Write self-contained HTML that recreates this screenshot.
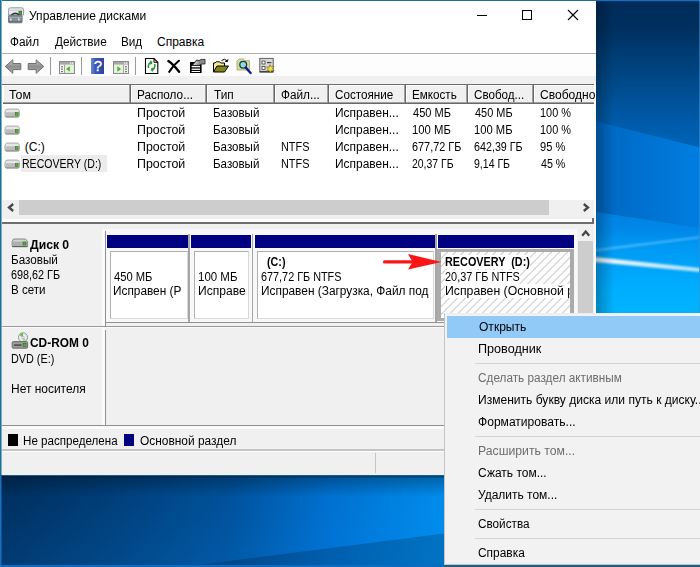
<!DOCTYPE html>
<html lang="ru">
<head>
<meta charset="utf-8">
<title>Управление дисками</title>
<style>
html,body{margin:0;padding:0;}
body{width:700px;height:567px;overflow:hidden;position:relative;background:#0b4f94;font-family:"Liberation Sans",sans-serif;font-size:12px;color:#000;}
.a{position:absolute;}
.t{position:absolute;white-space:pre;line-height:14px;font-size:12px;transform-origin:0 0;}
.b{font-weight:bold;}
#desk{position:absolute;left:0;top:0;width:700px;height:567px;}
#win{position:absolute;left:0;top:0;width:596px;height:476px;background:#fff;overflow:hidden;}
#ctx{position:absolute;left:444px;top:313px;width:260px;height:252px;background:#f2f2f2;border:1px solid #c4c4c4;border-top-color:#ececec;box-sizing:border-box;}
.hdr{position:absolute;top:85px;height:19px;background:#f0f0f0;box-sizing:border-box;border-right:1px solid #696969;border-bottom:1px solid #696969;box-shadow:inset -1px -1px 0 #a0a0a0, inset 1px 1px 0 #fff;}
.sep{position:absolute;top:57px;width:1px;height:18px;background:#9a9a9a;}
.ms{position:absolute;left:475px;width:225px;height:1px;background:#d4d4d4;}
.pb{position:absolute;top:251px;height:68px;background:#fff;box-sizing:border-box;border:1px solid #b0b0b0;border-right-color:#d8d8d8;border-bottom-color:#d8d8d8;}
</style>
</head>
<body>
<svg id="desk" width="700" height="567" viewBox="0 0 700 567">
<defs>
<linearGradient id="gA" gradientUnits="userSpaceOnUse" x1="0" y1="0" x2="0" y2="150"><stop offset="0" stop-color="#002b58"/><stop offset="0.19" stop-color="#003060"/><stop offset="0.4" stop-color="#003f78"/><stop offset="0.59" stop-color="#004c8e"/><stop offset="0.8" stop-color="#005aa8"/><stop offset="1" stop-color="#0064b8"/></linearGradient>
<linearGradient id="gB" gradientUnits="userSpaceOnUse" x1="606" y1="0" x2="700" y2="0"><stop offset="0" stop-color="#0068c4"/><stop offset="1" stop-color="#007ee2"/></linearGradient>
<linearGradient id="gC" gradientUnits="userSpaceOnUse" x1="0" y1="212" x2="0" y2="313"><stop offset="0" stop-color="#0082e2"/><stop offset="0.18" stop-color="#0088e8"/><stop offset="0.33" stop-color="#0098f4"/><stop offset="0.8" stop-color="#00b0ff"/><stop offset="1" stop-color="#00b4ff"/></linearGradient>
<linearGradient id="g2" gradientUnits="userSpaceOnUse" x1="0" y1="0" x2="444" y2="0"><stop offset="0" stop-color="#003060"/><stop offset="0.045" stop-color="#003264"/><stop offset="0.27" stop-color="#00407c"/><stop offset="0.52" stop-color="#00529c"/><stop offset="0.74" stop-color="#0070d0"/><stop offset="0.957" stop-color="#0088e8"/><stop offset="1" stop-color="#008cec"/></linearGradient>
<linearGradient id="gW" gradientUnits="userSpaceOnUse" x1="596" y1="0" x2="700" y2="0"><stop offset="0" stop-color="#fff" stop-opacity="0.95"/><stop offset="1" stop-color="#fff" stop-opacity="0.7"/></linearGradient>
<linearGradient id="sR" gradientUnits="userSpaceOnUse" x1="596" y1="0" x2="614" y2="0"><stop offset="0" stop-color="#000" stop-opacity="0.26"/><stop offset="1" stop-color="#000" stop-opacity="0"/></linearGradient>
<linearGradient id="sB" gradientUnits="userSpaceOnUse" x1="0" y1="476" x2="0" y2="497"><stop offset="0" stop-color="#000" stop-opacity="0.3"/><stop offset="1" stop-color="#000" stop-opacity="0"/></linearGradient>
<linearGradient id="lB" gradientUnits="userSpaceOnUse" x1="0" y1="500" x2="0" y2="565"><stop offset="0" stop-color="#1090ff" stop-opacity="0"/><stop offset="1" stop-color="#1090ff" stop-opacity="0.12"/></linearGradient>
<filter id="bl" x="-5%" y="-50%" width="110%" height="200%"><feGaussianBlur stdDeviation="0.8"/></filter>
</defs>
<rect x="590" y="0" width="110" height="320" fill="url(#gA)"/>
<polygon points="590,120 700,147.5 700,320 590,320" fill="url(#gB)"/>
<polygon points="590,211 700,228 700,320 590,320" fill="url(#gC)"/>
<polygon points="590,250 700,236.5 700,238 590,252" fill="#7cd0ff" opacity="0.7" filter="url(#bl)"/>
<polygon points="590,256.5 700,268 700,272 590,261.5" fill="url(#gW)" filter="url(#bl)"/>
<rect x="596" y="0" width="20" height="320" fill="url(#sR)"/>
<rect x="596" y="0" width="104" height="1.2" fill="#1a70b8"/>
<rect x="699" y="0" width="1" height="313" fill="#3a90d0" opacity="0.6"/>
<rect x="0" y="470" width="450" height="97" fill="url(#g2)"/>
<rect x="0" y="500" width="450" height="67" fill="url(#lB)"/>
<polygon points="190,567 190,566 444,533.5 444,567" fill="#000" opacity="0.18"/>
<rect x="0" y="476" width="450" height="22" fill="url(#sB)"/>
<rect x="0" y="476" width="450" height="1.5" fill="#021c3c" opacity="0.4"/>
<rect x="0" y="565" width="450" height="2" fill="#0a6cc0"/>
<rect x="0" y="476" width="1.5" height="91" fill="#1a70c0"/>
</svg>
<svg width="0" height="0" style="position:absolute"><defs>
<symbol id="drv" viewBox="0 0 18 11"><path d="M3.4 1.2 H14.6 Q16 1.2 16.6 2.6 L17.2 4.6 V8.4 Q17.2 10 15.6 10 H2.4 Q0.8 10 0.8 8.4 V4.6 L1.4 2.6 Q2 1.2 3.4 1.2 Z" fill="#e6e6e6" stroke="#8c8c8c" stroke-width="0.8"/><path d="M1.2 4.8 H16.8 V8.4 Q16.8 9.6 15.6 9.6 H2.4 Q1.2 9.6 1.2 8.4 Z" fill="#bcbcbc"/><path d="M1.6 9.7 Q2 10.2 2.8 10.2 H15.2 Q16 10.2 16.4 9.7" fill="none" stroke="#5e5e5e" stroke-width="0.9"/><rect x="12.4" y="5.2" width="3.2" height="3.2" fill="#4cb82e" stroke="#2b6e1e" stroke-width="0.6"/></symbol>
<symbol id="dsk" viewBox="0 0 18 11"><path d="M2.6 2 H14.4 L16.6 4.4 V8.6 Q16.6 9.6 15.6 9.6 H2.2 Q1.2 9.6 1.2 8.6 V4.4 Z" fill="#d4d4d4" stroke="#7a7a7a" stroke-width="0.9"/><path d="M1.6 4.6 H16.2 V8.6 Q16.2 9.2 15.6 9.2 H2.2 Q1.6 9.2 1.6 8.6 Z" fill="#aeb0b0"/><path d="M1.2 9.6 H16.6" stroke="#5c5c5c" stroke-width="1"/><rect x="12" y="5" width="3" height="3" fill="#58b030" stroke="#2c6e14" stroke-width="0.6"/></symbol>
<symbol id="cdr" viewBox="0 0 18 18"><circle cx="12" cy="6.4" r="4.6" fill="#e8ecec" stroke="#8c9494" stroke-width="0.9"/><path d="M8.4 4 A4.6 4.6 0 0 1 12 1.8 L12 6.4 Z" fill="#6cc04c"/><path d="M15.6 8.8 A4.6 4.6 0 0 1 12 11 L12 6.4 Z" fill="#a8d8a0"/><circle cx="12" cy="6.4" r="1.2" fill="#fff" stroke="#8c9494" stroke-width="0.6"/><rect x="1.2" y="10.6" width="15.4" height="6.6" rx="1" fill="#9a9c9c" stroke="#606464" stroke-width="0.9"/><rect x="3" y="13.4" width="7.6" height="1.4" fill="#404444"/><rect x="12.2" y="12.6" width="2.8" height="2.8" fill="#58b030" stroke="#2c6e14" stroke-width="0.6"/></symbol>
</defs></svg>
<div id="win">
<div class="a" style="left:0;top:0;width:596px;height:1px;background:#1b6f94;"></div>
<div class="a" style="left:0;top:0;width:2px;height:476px;background:linear-gradient(90deg,#1b6f94 0,#1b6f94 1px,#7fb0c8 1px,#7fb0c8 2px);"></div>
<div class="a" style="left:0;top:475px;width:596px;height:1px;background:#1b5f84;"></div>
<!-- toolbar -->
<div class="a" style="left:2px;top:53px;width:594px;height:1px;background:#b0b0b0;"></div>
<div class="a" style="left:2px;top:54px;width:594px;height:22px;background:#fdfdfd;"></div>
<div class="a" style="left:2px;top:76px;width:594px;height:8px;background:#f0f0f0;"></div>
<div class="sep" style="left:50px"></div>
<div class="sep" style="left:81px"></div>
<div class="sep" style="left:135px"></div>
<!-- toolbar icons -->
<svg class="a" style="left:4px;top:58px" width="18" height="17" viewBox="0 0 18 17"><defs><linearGradient id="ga" x1="0" y1="0" x2="0" y2="1"><stop offset="0" stop-color="#c4c4c4"/><stop offset="0.5" stop-color="#8e8e8e"/><stop offset="1" stop-color="#b0b0b0"/></linearGradient></defs><path d="M1.2 8.5 L8.8 1.8 V5.5 H16.8 V11.6 H8.8 V15.3 Z" fill="url(#ga)" stroke="#707070" stroke-width="1" stroke-linejoin="round"/></svg>
<svg class="a" style="left:27px;top:58px" width="18" height="17" viewBox="0 0 18 17"><path d="M16.8 8.5 L9.2 1.8 V5.5 H1.2 V11.6 H9.2 V15.3 Z" fill="url(#ga)" stroke="#707070" stroke-width="1" stroke-linejoin="round"/></svg>
<svg class="a" style="left:58px;top:60px" width="18" height="15" viewBox="0 0 18 15"><rect x="1.5" y="1.5" width="15" height="12" fill="#f4f4f4" stroke="#8a8a8a"/><rect x="2" y="2" width="14" height="2.6" fill="#a8a8a8"/><rect x="12" y="2.4" width="1.4" height="1.4" fill="#f0f0f0"/><rect x="14" y="2.4" width="1.4" height="1.4" fill="#f0f0f0"/><rect x="6.5" y="5" width="9.5" height="8" fill="#e4f2dc"/><rect x="6" y="4.6" width="0.9" height="9" fill="#9a9a9a"/><rect x="3" y="6.2" width="2" height="1.2" fill="#7a7a7a"/><rect x="3" y="8.6" width="2" height="1.2" fill="#7a7a7a"/><rect x="3" y="11" width="2" height="1.2" fill="#7a7a7a"/><path d="M8.2 9 L11.8 6.2 V11.8 Z" fill="#4cae2c"/></svg>
<svg class="a" style="left:91px;top:58px" width="14" height="16" viewBox="0 0 14 16"><defs><linearGradient id="gh" x1="0" y1="0" x2="1" y2="0"><stop offset="0" stop-color="#6f86d6"/><stop offset="0.35" stop-color="#3c56b4"/><stop offset="1" stop-color="#2f459c"/></linearGradient></defs><rect x="0" y="0" width="13" height="16" fill="url(#gh)"/><text x="6.8" y="13.2" font-family="Liberation Sans, sans-serif" font-size="15" fill="#fff" stroke="#fff" stroke-width="0.3" text-anchor="middle">?</text></svg>
<svg class="a" style="left:112px;top:60px" width="18" height="15" viewBox="0 0 18 15"><rect x="1.5" y="1.5" width="15" height="12" fill="#f4f4f4" stroke="#8a8a8a"/><rect x="2" y="2" width="14" height="2.6" fill="#a8a8a8"/><rect x="12" y="2.4" width="1.4" height="1.4" fill="#f0f0f0"/><rect x="14" y="2.4" width="1.4" height="1.4" fill="#f0f0f0"/><rect x="2" y="5" width="9.5" height="8" fill="#e4f2dc"/><rect x="11.2" y="4.6" width="0.9" height="9" fill="#9a9a9a"/><rect x="13" y="6.2" width="2" height="1.2" fill="#7a7a7a"/><rect x="13" y="8.6" width="2" height="1.2" fill="#7a7a7a"/><rect x="13" y="11" width="2" height="1.2" fill="#7a7a7a"/><path d="M9 9 L5.4 6.2 V11.8 Z" fill="#4cae2c"/></svg>
<svg class="a" style="left:144px;top:57px" width="16" height="18" viewBox="0 0 16 18"><path d="M1.5 1.5 H10 L13.8 5.3 V16.5 H1.5 Z" fill="#fff" stroke="#000" stroke-width="1.1"/><path d="M10 1.5 V5.3 H13.8" fill="none" stroke="#000" stroke-width="1"/><path d="M4.6 8.6 Q4.6 5.6 8 5.6 M8 5.6 l-1.8 -1.5 M8 5.6 l-1.8 1.6" fill="none" stroke="#2c9a2c" stroke-width="1.5"/><path d="M10.6 9.4 Q10.6 12.6 7.2 12.6 M7.2 12.6 l1.8 -1.6 M7.2 12.6 l1.8 1.6" fill="none" stroke="#2c9a2c" stroke-width="1.5"/><path d="M4.4 8 V11 M10.8 10 V7" stroke="#2c9a2c" stroke-width="1.5"/></svg>
<svg class="a" style="left:167px;top:59px" width="14" height="14" viewBox="0 0 16 16"><path d="M1.6 2.4 Q7 6 13.8 14.6" fill="none" stroke="#000" stroke-width="2.7" stroke-linecap="round"/><path d="M13.6 2 Q7 7 2.6 14.6" fill="none" stroke="#000" stroke-width="2.4" stroke-linecap="round"/></svg>
<svg class="a" style="left:189px;top:58px" width="17" height="16" viewBox="0 0 17 16"><rect x="1" y="4" width="11.6" height="11" fill="#000"/><rect x="2.6" y="8" width="8.4" height="1.3" fill="#fff"/><rect x="2.6" y="10.6" width="8.4" height="1.3" fill="#fff"/><rect x="2.6" y="13" width="8.4" height="1" fill="#fff"/><path d="M3 7.5 L7.5 2 L10 2.6 L12 1.4 L16 1.4 V6 L12.6 6 L10 7.6 L6 7.5 Z" fill="#8a8a8a" stroke="#202020" stroke-width="0.8"/><path d="M5 7 L8 3.6 M6.6 7 L9.4 4" stroke="#fff" stroke-width="0.7"/></svg>
<svg class="a" style="left:212px;top:57px" width="18" height="17" viewBox="0 0 18 17"><path d="M1.5 15 V6 H3 L4.2 4.8 H7.6 L8.8 6 H12.5 V9" fill="#f4ea90" stroke="#000" stroke-width="1"/><path d="M1.5 15 L5 9 H16.5 L12.5 15 Z" fill="#84841c" stroke="#000" stroke-width="1"/><path d="M9.5 3.6 Q12.5 0.8 15.2 3.8 M15.4 4.6 l-2.4 -0.4 M15.4 4.6 l0.6 -2.4" fill="none" stroke="#000" stroke-width="1"/></svg>
<svg class="a" style="left:236px;top:58px" width="17" height="17" viewBox="0 0 17 17"><path d="M1 12 V3 L3 1 H7.4 L9 2.6 H13.4 V12 Z" fill="#dadc9c" stroke="#a0a070" stroke-width="0.8"/><circle cx="7.2" cy="6.8" r="3.4" fill="#8cdce0" stroke="#1c3c3c" stroke-width="1.3"/><path d="M9.8 9.6 L14.6 15" stroke="#10208c" stroke-width="2.4" stroke-linecap="round"/></svg>
<svg class="a" style="left:259px;top:57px" width="17" height="18" viewBox="0 0 17 18"><rect x="0.8" y="1.4" width="13.4" height="13.6" fill="#d8d8d8" stroke="#606060" stroke-width="1"/><rect x="0.8" y="14" width="13.4" height="1.4" fill="#404040"/><rect x="3" y="4" width="3" height="3" fill="#fff" stroke="#404040" stroke-width="0.8"/><rect x="3" y="9.4" width="3" height="3" fill="#fff" stroke="#404040" stroke-width="0.8"/><rect x="8" y="5" width="4.4" height="1.2" fill="#404040"/><path d="M11 7.6 l1.3 2.2 l2.6 -0.5 l-1.4 2.2 l1.6 2 l-2.6 -0.2 l-1 2.6 l-1.2 -2.4 l-2.6 0.6 l1.6 -2.2 l-1.6 -2 l2.5 0.3 Z" fill="#f2e24a" stroke="#7a6a10" stroke-width="0.7"/></svg>
<!-- title icon -->
<svg class="a" style="left:8px;top:7px" width="18" height="18" viewBox="0 0 18 18"><path d="M2.4 0.8 H13.6 Q15.6 0.8 15.6 2.8 V8 H0.4 V2.8 Q0.4 0.8 2.4 0.8 Z" fill="#e6e9eb" stroke="#8a9298" stroke-width="0.9"/><path d="M1.4 3.2 H14.6" stroke="#c4c9cc" stroke-width="1"/><path d="M3.4 8 Q7.4 4.4 11.2 8" fill="none" stroke="#2e3338" stroke-width="1.5"/><rect x="10.9" y="4.2" width="2.8" height="3.2" fill="#4f9a2c" stroke="#2c5e14" stroke-width="0.6"/><rect x="0.5" y="8.4" width="13.6" height="7.4" rx="0.8" fill="#858d93" stroke="#6c747a" stroke-width="0.9"/><rect x="1" y="10" width="12.6" height="1" fill="#a4acb2"/><rect x="2" y="11.6" width="1.6" height="1.8" fill="#e8ecee"/><rect x="10" y="11.6" width="1.6" height="1.8" fill="#e8ecee"/><rect x="1" y="14" width="12.6" height="1.4" fill="#6a7278"/></svg>
<!-- window buttons -->
<div class="a" style="left:477px;top:15px;width:10px;height:1px;background:#000;"></div>
<div class="a" style="left:522px;top:10px;width:10px;height:10px;border:1px solid #000;box-sizing:border-box;"></div>
<svg class="a" style="left:567px;top:9px" width="12" height="12" viewBox="0 0 12 12"><path d="M1 1 L11 11 M11 1 L1 11" stroke="#000" stroke-width="1.1"/></svg>

<!-- list -->
<div class="a" style="left:2px;top:84px;width:594px;height:1px;background:#6e6e6e;"></div>
<div class="hdr" style="left:3px;width:128px;"></div>
<div class="hdr" style="left:131px;width:76px;"></div>
<div class="hdr" style="left:207px;width:68px;"></div>
<div class="hdr" style="left:275px;width:54px;"></div>
<div class="hdr" style="left:329px;width:77px;"></div>
<div class="hdr" style="left:406px;width:62px;"></div>
<div class="hdr" style="left:468px;width:66px;"></div>
<div class="hdr" style="left:534px;width:62px;"></div>
<div class="a" style="left:20.5px;top:155px;width:86.5px;height:17px;background:#ececec;"></div>
<svg class="a" style="left:3.8px;top:107.8px" width="16.4" height="9.8" viewBox="0 0 18 11"><use href="#drv"/></svg>
<svg class="a" style="left:3.8px;top:124.8px" width="16.4" height="9.8" viewBox="0 0 18 11"><use href="#drv"/></svg>
<svg class="a" style="left:3.8px;top:141.8px" width="16.4" height="9.8" viewBox="0 0 18 11"><use href="#drv"/></svg>
<svg class="a" style="left:3.8px;top:158.8px" width="16.4" height="9.8" viewBox="0 0 18 11"><use href="#drv"/></svg>
<!-- horizontal scrollbar -->
<div class="a" style="left:2px;top:200px;width:592px;height:19px;background:#f0f0f0;"></div>
<div class="a" style="left:19px;top:200px;width:530px;height:15px;background:#cdcdcd;"></div>
<svg class="a" style="left:3px;top:200px" width="16" height="15" viewBox="0 0 16 15"><path d="M10.2 4 L6 7.5 L10.2 11" fill="none" stroke="#484848" stroke-width="2.3"/></svg>
<svg class="a" style="left:578px;top:200px" width="16" height="15" viewBox="0 0 16 15"><path d="M5.8 4 L10 7.5 L5.8 11" fill="none" stroke="#484848" stroke-width="2.3"/></svg>
<!-- splitter -->
<div class="a" style="left:2px;top:222px;width:592px;height:2px;background:#6e6e6e;"></div>
<div class="a" style="left:592px;top:218px;width:2px;height:5px;background:#6e6e6e;"></div>
<!-- graphic view -->
<div class="a" style="left:2px;top:224px;width:592px;height:204px;background:#f0f0f0;"></div>
<div class="a" style="left:106px;top:229px;width:471px;height:93px;background:#f8f8fa;"></div>
<div class="a" style="left:102px;top:229px;width:3px;height:197px;background:#fbfbfb;"></div>
<div class="a" style="left:105px;top:231px;width:1px;height:97px;background:#909090;"></div>
<div class="a" style="left:105px;top:330px;width:1px;height:96px;background:#909090;"></div>
<div class="a" style="left:105px;top:322px;width:472px;height:1px;background:#929292;"></div>
<div class="a" style="left:2px;top:326px;width:575px;height:1px;background:#9a9a9a;"></div>
<div class="a" style="left:2px;top:327px;width:575px;height:1px;background:#fafafa;"></div>
<div class="a" style="left:2px;top:425px;width:592px;height:1px;background:#8e8e8e;"></div>
<div class="a" style="left:107px;top:235px;width:81px;height:13px;background:#000080;"></div>
<div class="a" style="left:191px;top:235px;width:60px;height:13px;background:#000080;"></div>
<div class="a" style="left:254.5px;top:235px;width:180.2px;height:13px;background:#000080;"></div>
<div class="a" style="left:438px;top:235px;width:135.6px;height:13px;background:#000080;"></div>
<div class="a pb" style="left:109.5px;width:78.0px;"></div>
<div class="a pb" style="left:194px;width:55px;"></div>
<div class="a pb" style="left:257px;width:176.5px;"></div>
<div class="a" style="left:436.5px;top:248.5px;width:137.3px;height:72px;box-sizing:border-box;border:3px solid #ababab;border-left-width:4px;border-right-width:4px;background:#fff;overflow:hidden;"><svg width="140" height="72" style="position:absolute;left:0;top:0"><defs><pattern id="hp" width="8" height="8" patternUnits="userSpaceOnUse" patternTransform="translate(6.5 0)"><path d="M-1 9 L9 -1 M-1 1 L1 -1 M7 9 L9 7" stroke="#a8a8a8" stroke-width="0.85"/></pattern></defs><rect width="140" height="72" fill="url(#hp)"/></svg></div>
<div class="a" style="left:188.2px;top:234px;width:1.4px;height:88px;background:#a6a6a6;"></div>
<div class="a" style="left:251.5px;top:234px;width:1.4px;height:88px;background:#a6a6a6;"></div>
<div class="a" style="left:435px;top:234px;width:1.5px;height:88px;background:#a6a6a6;"></div>
<!-- red arrow -->
<svg class="a" style="left:380px;top:250px" width="64" height="24" viewBox="380 250 64 24"><path d="M384.6 260.2 H413.5 V263.6 H384.6 A1.7 1.7 0 0 1 384.6 260.2 Z" fill="#fb1616"/><path d="M408 254.1 L441.6 261.9 L408 269.6 L412.6 261.9 Z" fill="#fb1616"/></svg>
<!-- disk icons -->
<svg class="a" style="left:11px;top:237px" width="18" height="11" viewBox="0 0 18 11"><use href="#dsk"/></svg>
<svg class="a" style="left:11px;top:331px" width="18" height="18" viewBox="0 0 18 18"><use href="#cdr"/></svg>
<!-- vscroll -->
<div class="a" style="left:578px;top:225px;width:16px;height:203px;background:#f0f0f0;"></div>
<div class="a" style="left:578.3px;top:241px;width:14.4px;height:186px;background:#cdcdcd;"></div>
<svg class="a" style="left:578px;top:226px" width="16" height="15" viewBox="0 0 16 15"><path d="M4.2 9.8 L7.7 5.6 L11.2 9.8" fill="none" stroke="#484848" stroke-width="2.3"/></svg>
<!-- legend -->
<div class="a" style="left:2px;top:426px;width:592px;height:3px;background:#fafafa;"></div>
<div class="a" style="left:2px;top:429px;width:594px;height:21px;background:#f0f0f0;"></div>
<div class="a" style="left:7.5px;top:434px;width:10.5px;height:11.6px;background:#000;"></div>
<div class="a" style="left:123.9px;top:434px;width:9.8px;height:11.6px;background:#000080;"></div>
<!-- status bar -->
<div class="a" style="left:2px;top:449px;width:594px;height:2px;background:#c4c4c4;"></div>
<div class="a" style="left:2px;top:451px;width:594px;height:1px;background:#fff;"></div>
<div class="a" style="left:2px;top:452px;width:594px;height:23px;background:#f0f0f0;"></div>
<div class="a" style="left:375px;top:453px;width:1px;height:20px;background:#c4c4c4;"></div>
<div class="a" style="left:594px;top:84px;width:2px;height:365px;background:#fcfcfc;"></div>
</div>

<div id="ctx"></div>
<div class="a" style="left:447px;top:316px;width:253px;height:22px;background:#91c9f7;"></div>
<div class="ms" style="top:363px"></div>
<div class="ms" style="top:436px"></div>
<div class="ms" style="top:509px"></div>
<div class="ms" style="top:538px"></div>
<div class="a" style="left:444px;top:565px;width:256px;height:2px;background:#1b5f84;"></div>
<div class="t" style="left:28.60px;top:9px;transform:scaleX(1.0035);">Управление дисками</div>
<div class="t" style="left:9.81px;top:35px;transform:scaleX(0.9857);">Файл</div>
<div class="t" style="left:55.00px;top:35px;transform:scaleX(0.9808);">Действие</div>
<div class="t" style="left:121.02px;top:35px;transform:scaleX(0.9762);">Вид</div>
<div class="t" style="left:157.00px;top:35px;transform:scaleX(1.0000);">Справка</div>
<div class="t" style="left:8.75px;top:88px;transform:scaleX(1.0357);">Том</div>
<div class="t" style="left:137.02px;top:88px;transform:scaleX(0.9818);">Располо...</div>
<div class="t" style="left:214.25px;top:88px;transform:scaleX(0.9868);">Тип</div>
<div class="t" style="left:281.02px;top:88px;transform:scaleX(0.9803);">Файл...</div>
<div class="t" style="left:335.28px;top:88px;transform:scaleX(0.9746);">Состояние</div>
<div class="t" style="left:411.93px;top:88px;transform:scaleX(0.9711);">Емкость</div>
<div class="t" style="left:473.93px;top:88px;transform:scaleX(0.9700);">Свобод...</div>
<div class="t" style="left:539.89px;top:88px;transform:scaleX(1.0056);width:54.7px;overflow:hidden;">Свободно</div>
<div class="t" style="left:136.97px;top:106px;transform:scaleX(1.0333);">Простой</div>
<div class="t" style="left:213.29px;top:106px;transform:scaleX(0.9628);">Базовый</div>
<div class="t" style="left:335.25px;top:106px;transform:scaleX(0.9960);">Исправен...</div>
<div class="t" style="left:412.90px;top:106px;transform:scaleX(0.9195);">450 МБ</div>
<div class="t" style="left:474.90px;top:106px;transform:scaleX(0.9122);">450 МБ</div>
<div class="t" style="left:539.99px;top:106px;transform:scaleX(0.9091);">100 %</div>
<div class="t" style="left:136.97px;top:123px;transform:scaleX(1.0333);">Простой</div>
<div class="t" style="left:213.29px;top:123px;transform:scaleX(0.9628);">Базовый</div>
<div class="t" style="left:335.25px;top:123px;transform:scaleX(0.9960);">Исправен...</div>
<div class="t" style="left:411.96px;top:123px;transform:scaleX(0.9425);">100 МБ</div>
<div class="t" style="left:473.96px;top:123px;transform:scaleX(0.9350);">100 МБ</div>
<div class="t" style="left:539.99px;top:123px;transform:scaleX(0.9091);">100 %</div>
<div class="t" style="left:24.75px;top:140px;transform:scaleX(1.0000);">(C:)</div>
<div class="t" style="left:136.97px;top:140px;transform:scaleX(1.0333);">Простой</div>
<div class="t" style="left:213.29px;top:140px;transform:scaleX(0.9628);">Базовый</div>
<div class="t" style="left:281.09px;top:140px;transform:scaleX(0.9083);">NTFS</div>
<div class="t" style="left:335.25px;top:140px;transform:scaleX(0.9960);">Исправен...</div>
<div class="t" style="left:411.99px;top:140px;transform:scaleX(0.9057);">677,72 ГБ</div>
<div class="t" style="left:474.01px;top:140px;transform:scaleX(0.8943);">642,39 ГБ</div>
<div class="t" style="left:539.98px;top:140px;transform:scaleX(0.9231);">95 %</div>
<div class="t" style="left:21.62px;top:157px;transform:scaleX(0.8792);">RECOVERY (D:)</div>
<div class="t" style="left:136.97px;top:157px;transform:scaleX(1.0333);">Простой</div>
<div class="t" style="left:213.29px;top:157px;transform:scaleX(0.9628);">Базовый</div>
<div class="t" style="left:281.09px;top:157px;transform:scaleX(0.9083);">NTFS</div>
<div class="t" style="left:335.25px;top:157px;transform:scaleX(0.9960);">Исправен...</div>
<div class="t" style="left:412.03px;top:157px;transform:scaleX(0.8696);">20,37 ГБ</div>
<div class="t" style="left:474.02px;top:157px;transform:scaleX(0.8775);">9,14 ГБ</div>
<div class="t" style="left:540.90px;top:157px;transform:scaleX(0.8889);">45 %</div>
<div class="t b" style="left:29.50px;top:238px;transform:scaleX(1.0132);">Диск 0</div>
<div class="t" style="left:10.78px;top:253px;transform:scaleX(0.9734);">Базовый</div>
<div class="t" style="left:10.85px;top:268px;transform:scaleX(0.9009);">698,62 ГБ</div>
<div class="t" style="left:10.79px;top:283px;transform:scaleX(0.9632);">В сети</div>
<div class="t b" style="left:29.50px;top:336px;transform:scaleX(0.9915);">CD-ROM 0</div>
<div class="t" style="left:10.85px;top:352px;transform:scaleX(0.9022);">DVD (E:)</div>
<div class="t" style="left:10.75px;top:382px;transform:scaleX(0.9966);">Нет носителя</div>
<div class="t" style="left:114.25px;top:270px;transform:scaleX(0.9329);">450 МБ</div>
<div class="t" style="left:113.26px;top:284px;transform:scaleX(0.9853);width:73.1px;overflow:hidden;">Исправен (Р</div>
<div class="t" style="left:197.79px;top:270px;transform:scaleX(0.9563);">100 МБ</div>
<div class="t" style="left:197.74px;top:284px;transform:scaleX(1.0054);width:49.7px;overflow:hidden;">Исправе</div>
<div class="t b" style="left:266.61px;top:255px;transform:scaleX(0.8947);">(C:)</div>
<div class="t" style="left:260.85px;top:270px;transform:scaleX(0.9034);">677,72 ГБ NTFS</div>
<div class="t" style="left:260.76px;top:284px;transform:scaleX(0.9896);">Исправен (Загрузка, Файл под</div>
<div class="t b" style="left:445.10px;top:255px;transform:scaleX(0.9032);background:#fff;">RECOVERY  (D:)</div>
<div class="t" style="left:445.09px;top:270px;transform:scaleX(0.9086);background:#fff;">20,37 ГБ NTFS</div>
<div class="t" style="left:444.98px;top:284px;transform:scaleX(1.0217);background:#fff;width:121.9px;overflow:hidden;">Исправен (Основной раздел)</div>
<div class="t" style="left:22.78px;top:434px;transform:scaleX(0.9665);">Не распределена</div>
<div class="t" style="left:139.50px;top:434px;transform:scaleX(0.9927);">Основной раздел</div>
<div class="t" style="left:479.00px;top:320px;transform:scaleX(1.0043);">Открыть</div>
<div class="t" style="left:477.95px;top:342px;transform:scaleX(1.0508);">Проводник</div>
<div class="t" style="left:478.02px;top:371px;transform:scaleX(0.9814);color:#6d6d6d;">Сделать раздел активным</div>
<div class="t" style="left:478.00px;top:393px;transform:scaleX(1.0046);">Изменить букву диска или путь к диску...</div>
<div class="t" style="left:477.99px;top:415px;transform:scaleX(1.0053);">Форматировать...</div>
<div class="t" style="left:477.98px;top:444px;transform:scaleX(1.0183);color:#6d6d6d;">Расширить том...</div>
<div class="t" style="left:478.00px;top:466px;transform:scaleX(0.9985);">Сжать том...</div>
<div class="t" style="left:478.00px;top:488px;transform:scaleX(0.9987);">Удалить том...</div>
<div class="t" style="left:478.02px;top:517px;transform:scaleX(0.9788);">Свойства</div>
<div class="t" style="left:478.01px;top:546px;transform:scaleX(0.9935);">Справка</div>
</body>
</html>
